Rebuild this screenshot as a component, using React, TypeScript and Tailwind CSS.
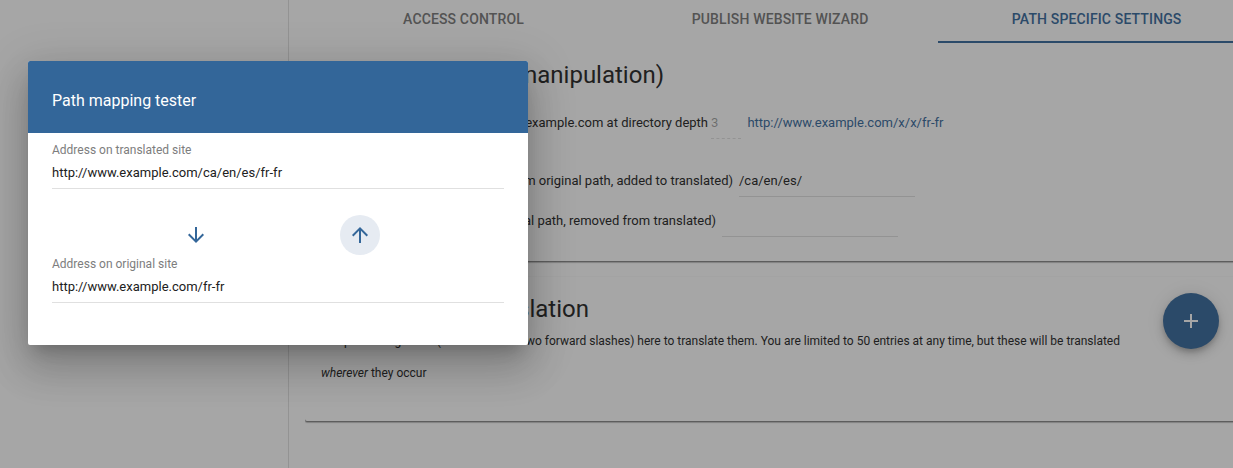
const tabs = [
  { label: "Access control", active: false },
  { label: "Publish website wizard", active: false },
  { label: "Path specific settings", active: true },
];

function Tabs() {
  return (
    <nav className="flex h-[43px] w-[974px] shrink-0 pl-[16.2px]">
      {tabs.map((t) => (
        <div
          key={t.label}
          className={
            t.active
              ? "flex w-[316.6px] shrink-0 justify-center border-b-2 border-[#336699] pt-[8px] text-sm leading-[22px] font-medium tracking-[0.14px] whitespace-nowrap text-[#336699] uppercase"
              : "flex w-[316.6px] shrink-0 justify-center pt-[8px] text-sm leading-[22px] font-medium tracking-[0.14px] whitespace-nowrap text-[#757575] uppercase"
          }
        >
          {t.label}
        </div>
      ))}
    </nav>
  );
}

function Field({ label, value }: { label: string; value: string }) {
  return (
    <label className="flex h-[47px] flex-col border-b border-black/12">
      <span className="text-[12px] leading-[16px] text-[#7d7d7d]">{label}</span>
      <span className="mt-[6px] text-[13px] leading-[18px] text-[#212121]">{value}</span>
    </label>
  );
}

const cardShadow =
  "shadow-[0_1px_0_0_rgba(0,0,0,0.3),0_2px_1px_0_rgba(0,0,0,0.25),0_-1px_0_0_rgba(0,0,0,0.02)]";

export default function App() {
  return (
    <div className="relative flex h-[468px] w-full overflow-hidden bg-white font-['Roboto',sans-serif] text-[13px] text-[#212121]">
      <aside className="w-[289px] shrink-0 border-r border-black/12" />
      <main className="flex w-[944px] shrink-0 flex-col overflow-hidden">
        <Tabs />
        <section className={`${cardShadow} ml-[16px] flex h-[218px] w-[960px] shrink-0 flex-col rounded-[2px] bg-white [clip-path:inset(4px_-4px_-4px_0)]`}>
          <h2 className="mt-[16px] flex h-[32px] w-[359px] justify-end text-2xl whitespace-nowrap">
            Paths (and manipulation)
          </h2>
          <div className="mt-[22px] flex h-[24px] items-start leading-[20px]">
            <span className="flex w-[403px] justify-end whitespace-nowrap">
              Paths on example.com at directory depth
            </span>
            <span className="ml-[3px] h-[26px] w-[30px] border-b border-dashed border-black/12 text-black/38">3</span>
            <a className="ml-[6.4px] text-[#336699]">http://www.example.com/x/x/fr-fr</a>
          </div>
          <div className="mt-[34px] flex h-[26px] leading-[20px]">
            <span className="flex w-[428px] justify-end whitespace-nowrap">
              Prefix (removed from original path, added to translated)
            </span>
            <span className="ml-[6px] w-[176px] border-b border-black/12">/ca/en/es/</span>
          </div>
          <div className="mt-[14px] flex h-[26px] leading-[20px]">
            <span className="flex w-[411px] justify-end whitespace-nowrap">
              Prefix (added to original path, removed from translated)
            </span>
            <span className="ml-[6px] w-[176px] border-b border-black/12" />
          </div>
        </section>
        <section className={`${cardShadow} mt-[16px] ml-[16px] flex h-[144px] w-[960px] shrink-0 flex-col rounded-[2px] bg-white [clip-path:inset(-1px_-4px_-4px_0)]`}>
          <h2 className="mt-[16px] flex h-[32px] w-[284px] justify-end text-2xl whitespace-nowrap">
            Path translation
          </h2>
          <p className="flex h-[32px] w-[815px] items-center justify-end text-[12px] whitespace-nowrap">
            Put path strings here (those between two forward slashes) here to translate them. You are limited to 50 entries at any time, but these will be translated
          </p>
          <p className="ml-[16px] flex h-[32px] items-center gap-[3px] text-[12px]">
            <em>wherever</em>
            <span>they occur</span>
          </p>
        </section>
      </main>

      <button
        aria-label="Add"
        className="absolute top-[293px] left-[1163px] flex size-14 items-center justify-center rounded-full bg-[#336699] shadow-[0_3px_5px_-1px_rgba(0,0,0,0.2),0_6px_10px_0_rgba(0,0,0,0.14),0_1px_18px_0_rgba(0,0,0,0.12)]"
      >
        <svg viewBox="0 0 24 24" className="size-6 fill-white">
          <path d="M19 13h-6v6h-2v-6H5v-2h6V5h2v6h6v2z" />
        </svg>
      </button>

      <div className="absolute inset-0 bg-[rgba(33,33,33,0.4)]" />

      <div
        role="dialog"
        className="absolute top-[61px] left-[28px] flex h-[284px] w-[500px] flex-col overflow-visible rounded-[2px] bg-white shadow-[0_11px_15px_-7px_rgba(0,0,0,0.2),0_24px_38px_3px_rgba(0,0,0,0.14),0_9px_46px_8px_rgba(0,0,0,0.12)]"
      >
        <header className="flex h-[72px] shrink-0 items-center rounded-t-[2px] bg-[#336699] px-6 pt-[7px] text-base text-white">
          Path mapping tester
        </header>
        <div className="flex flex-col px-6 pt-[9px]">
          <Field label="Address on translated site" value="http://www.example.com/ca/en/es/fr-fr" />
          <div className="flex h-[67px] gap-[124px] pt-[26px] pl-[124px]">
            <button aria-label="Map down" className="flex size-10 shrink-0 items-center justify-center rounded-full">
              <svg viewBox="0 0 24 24" className="size-6 fill-[#336699]">
                <path d="M20 12l-1.41-1.41L13 16.17V4h-2v12.17l-5.58-5.59L4 12l8 8 8-8z" />
              </svg>
            </button>
            <button aria-label="Map up" className="flex size-10 shrink-0 items-center justify-center rounded-full bg-[#e6ebf2]">
              <svg viewBox="0 0 24 24" className="size-6 fill-[#336699]">
                <path d="M4 12l1.41 1.41L11 7.83V20h2V7.83l5.58 5.59L20 12l-8-8-8 8z" />
              </svg>
            </button>
          </div>
          <Field label="Address on original site" value="http://www.example.com/fr-fr" />
        </div>
      </div>
    </div>
  );
}
